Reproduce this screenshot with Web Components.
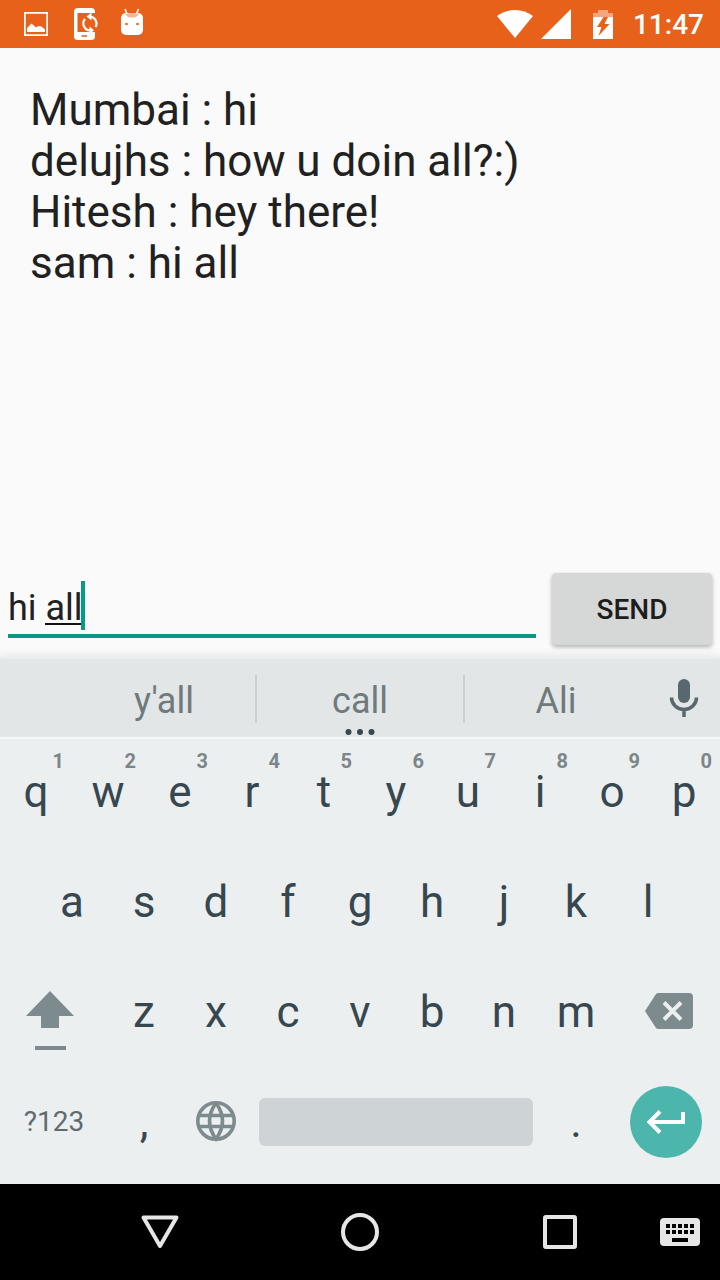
<!DOCTYPE html>
<html lang="en">
<head>
<meta charset="utf-8">
<meta name="viewport" content="width=device-width, initial-scale=1">
<title>Chat</title>
<style>
  html, body { margin: 0; height: 100%; }
  body { font-family: Roboto, "Noto Sans", sans-serif; background: #fafafa; color: #212121; }
</style>
</head>
<body>
<chat-screen>
  <status-bar slot="status"></status-bar>
  <chat-log slot="log">
    <chat-line name="Mumbai">hi</chat-line>
    <chat-line name="delujhs">how u doin all?:)</chat-line>
    <chat-line name="Hitesh">hey there!</chat-line>
    <chat-line name="sam">hi all</chat-line>
  </chat-log>
  <message-composer slot="composer"></message-composer>
  <suggestion-strip slot="keyboard"></suggestion-strip>
  <soft-keyboard slot="keyboard"></soft-keyboard>
  <nav-bar slot="nav"></nav-bar>
</chat-screen>

<script>
const RESET = `
  *, *::before, *::after { box-sizing: border-box; }
  button { margin: 0; padding: 0; border: 0; background: none; font: inherit; color: inherit; cursor: pointer; }
  svg { display: block; overflow: visible; }
`;

function define(name, render) {
  customElements.define(name, class extends HTMLElement {
    constructor() {
      super();
      this.attachShadow({ mode: 'open' });
    }
    connectedCallback() {
      this.shadowRoot.innerHTML = `<style>${RESET}</style>` + render(this);
    }
  });
}

define('chat-screen', () => `
  <style>
    :host { display: flex; flex-direction: column; min-height: 100vh; }
    main { flex: 1; display: flex; flex-direction: column; }
    ::slotted(chat-log) { flex: 1; }
  </style>
  <slot name="status"></slot>
  <main><slot name="log"></slot><slot name="composer"></slot></main>
  <slot name="keyboard"></slot>
  <slot name="nav"></slot>
`);

define('status-bar', () => `
  <style>
    :host { display: flex; align-items: center; height: 48px; padding: 0 16px 0 24px; background: #e8611a; color: #fff; }
    .left { display: flex; align-items: center; gap: 24px; flex: 1; }
    .right { display: flex; align-items: center; }
    .signal { margin-left: 8px; }
    .battery { margin-left: 22px; }
    time { margin-left: 20px; padding-top: 2px; font-size: 28px; line-height: 32px; font-weight: 500; }
  </style>
  <div class="left">
    <svg width="24" height="24" viewBox="0 0 24 24" fill="#fff" aria-label="Screenshot saved">
      <path fill-rule="evenodd" d="M0 0h24v24H0zM1.700 1.700v20.600h20.600V1.700z"/>
      <path d="M3 20v-4l4.500-4.500 4.500 4 2.500-1.500 3 .5 3.500 3V20z"/>
    </svg>
    <svg width="24" height="32" viewBox="-2 0 24 32" aria-label="Syncing">
      <path fill="#fff" d="M4 0h13q4 0 4 3.500V5H3.500v19H21v4.500q0 3.500-4 3.500H4q-4 0-4-3.500v-25Q0 0 4 0z"/>
      <path d="M7.500 28h5.500" stroke="#e8611a" stroke-width="1.500"/>
      <g fill="none" stroke="#fff" stroke-width="2.200">
        <path d="M16 8.500a7 7 0 0 1 5.500 10.500M16.500 22.500A7 7 0 0 1 11 11"/>
      </g>
      <path fill="#fff" d="M17.500 4.500v8l-5-4zM15.500 18.500v7.500l4.500-3.700z"/>
    </svg>
    <svg width="24" height="30" viewBox="0 0 24 30" aria-label="Debugging connected">
      <path d="M5 0l2.500 6M18.500 0L16 6" stroke="#fff" stroke-width="1.600"/>
      <rect x="1" y="4" width="22" height="22" rx="5" fill="#fff"/>
      <path fill="#f7b594" d="M5 5q7-2 14 0l-3 3q-4 1-8 0z"/>
      <circle cx="6.500" cy="15" r="1.300" fill="#e8611a"/><circle cx="17.500" cy="15" r="1.300" fill="#e8611a"/>
    </svg>
  </div>
  <div class="right">
    <svg width="36" height="30" viewBox="0 0 36 30" aria-label="Wi-Fi"><path fill="#fff" d="M0 7Q8 1 18 1T36 7L18 29z"/></svg>
    <svg class="signal" width="30" height="30" viewBox="0 0 30 30" aria-label="Signal"><path fill="#fff" d="M30 0v30H0z"/></svg>
    <svg class="battery" width="20" height="30" viewBox="0 0 20 30" aria-label="Charging">
      <path fill="#f5a57e" d="M0 4h5V1h10v3h5v4H0z"/><path fill="#fff" d="M0 8h20v22H0z"/>
      <path fill="#e8611a" d="M10.500 8L4 18h4.500L5.500 27 16.500 15h-5L15 8z"/>
    </svg>
    <time>11:47</time>
  </div>
`);

define('chat-log', () => `
  <style>:host { display: block; padding: 37px 30px 36px; font-size: 44px; line-height: 51px; }</style>
  <slot></slot>
`);

define('chat-line', el => `
  <style>:host { display: block; }</style>${el.getAttribute('name')} : <slot></slot>
`);

define('message-composer', () => `
  <style>
    :host { display: block; }
    form { display: flex; align-items: center; gap: 16px; margin: 0; padding: 0 8px 12px; }
    .field { position: relative; flex: 1; min-width: 0; }
    input { display: block; width: 100%; height: 58px; margin: 0; padding: 2px 0 0; border: 0; border-bottom: 4px solid #0b9886; border-radius: 0;
      background: none; outline: 0; color: #212121; font: 36px/52px Roboto, sans-serif; caret-color: #0b9886; }
    .composing { position: absolute; left: 37px; top: 43px; width: 37px; height: 2px; background: #111; }
    .caret { position: absolute; left: 73px; top: 1px; width: 4px; height: 49px; background: #0b9886; }
    button { width: 160px; height: 72px; border-radius: 4px; background: #d6d7d7; color: #1d1d1d; padding-top: 2px;
      font-size: 28px; line-height: 32px; font-weight: 500; box-shadow: 0 2px 4px rgba(0,0,0,.3); }
  </style>
  <form onsubmit="return false">
    <div class="field">
      <input type="text" value="hi all" aria-label="Message" autocomplete="off" spellcheck="false">
      <i class="composing"></i><i class="caret"></i>
    </div>
    <button type="submit">SEND</button>
  </form>
`);

define('suggestion-strip', () => `
  <style>
    :host { display: grid; grid-template-columns: 9fr 23fr 26fr 23fr 9fr; height: 80px; border-top: 2px solid #e9edee; box-sizing: border-box;
      background: #e2e6e7; color: #6f7a7d; font-size: 36px; line-height: 42px; box-shadow: 0 -2px 8px rgba(0,0,0,.08); }
    button { position: relative; padding-top: 6px; }
    .first { grid-column: 2; }
    .main::before, .main::after { content: ""; position: absolute; top: 16px; width: 2px; height: 48px; background: #c9cfd0; }
    .main::before { left: -1px; }
    .main::after { right: -1px; }
    .more { position: absolute; left: 0; right: 0; bottom: 2px; margin: 0 auto; }
    .mic svg { margin: 0 auto; }
    .mic { padding-top: 0; }
  </style>
  <button class="first">y'all</button>
  <button class="main">call<svg class="more" width="30" height="6" viewBox="0 0 30 6" fill="#37474f"><circle cx="3.500" cy="3" r="3"/><circle cx="15" cy="3" r="3"/><circle cx="26.500" cy="3" r="3"/></svg></button>
  <button>Ali</button>
  <button class="mic" aria-label="Voice input">
    <svg width="28" height="38" viewBox="0 0 28 38"><rect x="8" width="12" height="24" rx="6" fill="#57686e"/>
      <path d="M1.500 18.500a12.500 12 0 0 0 25 0M14 30v8" fill="none" stroke="#57686e" stroke-width="3.500"/></svg>
  </button>
`);

define('key-cap', el => `
  <style>
    :host { display: block; min-width: 0; }
    button { position: relative; display: flex; align-items: center; justify-content: center; width: 100%; height: 100%; }
    :host([kind="mode"]) button { font-size: 28px; line-height: 32px; color: #5f6b6f; }
    small { position: absolute; top: 12px; right: 8px; font-size: 20px; line-height: 24px; font-weight: 700; color: #7b868a; }
  </style>
  <button aria-label="${el.getAttribute('label') || ''}"><slot></slot>${el.hasAttribute('hint') ? `<small>${el.getAttribute('hint')}</small>` : ''}</button>
`);

const letters = (s, hints = '') => [...s].map((c, i) =>
  `<key-cap label="${c}"${hints ? ` hint="${hints[i]}"` : ''}>${c}</key-cap>`).join('');

define('soft-keyboard', () => `
  <style>
    :host { display: grid; grid-auto-rows: 110px; padding-bottom: 7px; background: #ebefef; color: #37474f;
      font-size: 44px; line-height: 52px; box-shadow: inset 0 2px #f5f8f8; position: relative; }
    .row { display: grid; grid-template-columns: repeat(20, 1fr); }
    key-cap { grid-column: span 2; }
    .row .wide { grid-column: span 3; }
    .inset key-cap:first-child { grid-column: 2 / span 2; }
    .row .space { grid-column: span 8; }
    .bar { display: block; width: 38vw; height: 48px; border-radius: 6px; background: #ced4d6; }
    .shift { margin-top: 18px; margin-right: 8px; }
    .delete { margin-left: 6px; }
    .enter { display: grid; place-items: center; width: 72px; height: 72px; border-radius: 50%; background: #4db6ac; }
  </style>
  <div class="row">${letters('qwertyuiop', '1234567890')}</div>
  <div class="row inset">${letters('asdfghjkl')}</div>
  <div class="row">
    <key-cap class="wide" label="Shift"><svg class="shift" width="48" height="60" viewBox="0 0 48 60" fill="#7d8b8f"><path d="M24 0l24 25H33v12H15V25H0z"/><path d="M9 55h31v4H9z"/></svg></key-cap>
    ${letters('zxcvbnm')}
    <key-cap class="wide" label="Backspace"><svg class="delete" width="48" height="36" viewBox="-1 1 48 36"><path fill="#7d8b8f" d="M12 0h31q4 0 4 4v28q0 4-4 4H12q-1 0-2-1L-1 18 10 1q1-1 2-1z"/><path d="M18 9.500l17 17M35 9.500l-17 17" stroke="#ebefef" stroke-width="4"/></svg></key-cap>
  </div>
  <div class="row">
    <key-cap class="wide" kind="mode" label="Symbols">?123</key-cap>
    <key-cap label="Comma">,</key-cap>
    <key-cap label="Language"><svg width="40" height="40" viewBox="0 1 40 40" fill="none" stroke="#7d8b8f" stroke-width="3.600"><circle cx="20" cy="20" r="18.200"/><path d="M20 2q-13 18 0 36q13-18 0-36M3 14.500h34M3 25.500h34"/></svg></key-cap>
    <key-cap class="space" label="Space"><span class="bar"></span></key-cap>
    <key-cap label="Period">.</key-cap>
    <key-cap class="wide" label="Enter"><span class="enter"><svg width="38" height="24" viewBox="0 0 38 24" fill="none" stroke="#fff" stroke-width="4"><path d="M36 2v10H3M13 1.500L2.500 12 13 22.500"/></svg></span></key-cap>
  </div>
`);

define('nav-bar', () => `
  <style>
    :host { display: grid; grid-template-columns: 3fr 10fr 10fr 10fr 2fr 1fr; height: 96px; background: #000; }
    button { display: flex; align-items: center; justify-content: center; }
    .back { grid-column: 2; }
  </style>
  <button class="back" aria-label="Back"><svg width="38" height="34" viewBox="0 0 38 34"><path d="M2.500 2.500h33L19 31z" fill="none" stroke="#e6e6e6" stroke-width="4" stroke-linejoin="round"/></svg></button>
  <button aria-label="Home"><svg width="38" height="38" viewBox="0 0 38 38"><circle cx="19" cy="19" r="17" fill="none" stroke="#e6e6e6" stroke-width="4"/></svg></button>
  <button aria-label="Recent apps"><svg width="34" height="34" viewBox="0 0 34 34"><rect x="2" y="2" width="30" height="30" rx="1" fill="none" stroke="#e6e6e6" stroke-width="4"/></svg></button>
  <button aria-label="Switch keyboard"><svg width="40" height="28" viewBox="0 0 40 28"><rect width="40" height="28" rx="4" fill="#e6e6e6"/><path d="M6 8h28M6 14h28" stroke="#000" stroke-width="4" stroke-dasharray="4 2"/><path d="M12 22h16" stroke="#000" stroke-width="4"/></svg></button>
`);
</script>
</body>
</html>
